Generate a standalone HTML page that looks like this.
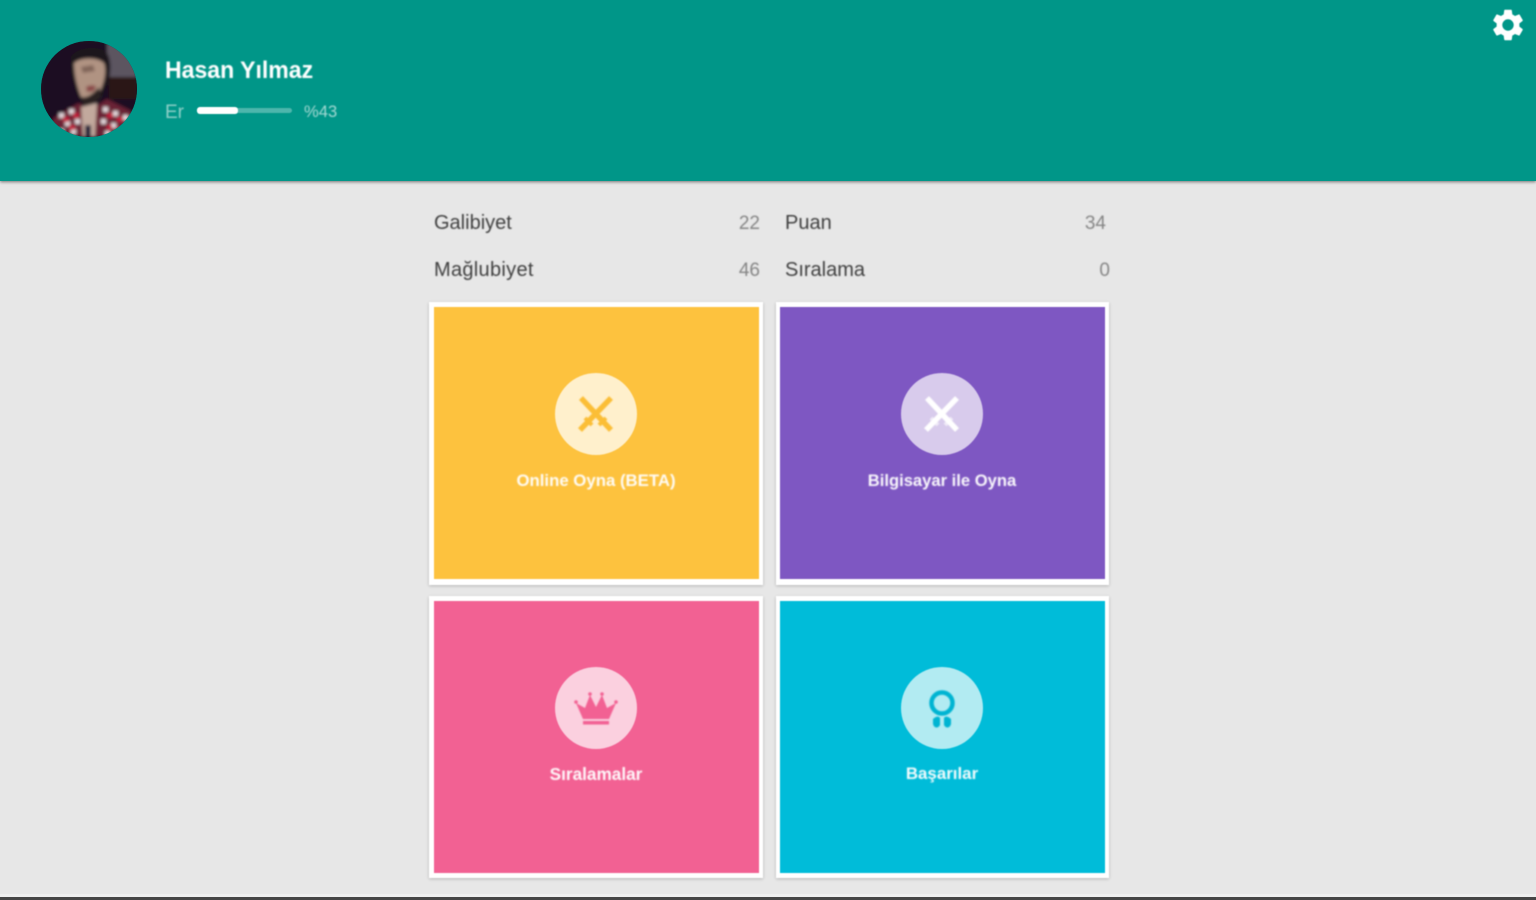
<!DOCTYPE html>
<html lang="tr">
<head>
<meta charset="utf-8">
<title>Profil</title>
<style>
html,body{margin:0;padding:0;width:1536px;height:900px;overflow:hidden;background:#e7e7e7;font-family:"Liberation Sans",sans-serif}
.abs{position:absolute}
#page{position:relative;width:1536px;height:900px;overflow:hidden;background:#e7e7e7}
#hdr{left:0;top:0;width:1536px;height:181px;background:#009688;box-shadow:0 1px 3px rgba(0,0,0,.5);filter:none}
.t{position:absolute;white-space:nowrap;filter:blur(.7px)}
.card{position:absolute;background:#fff;box-shadow:0 1px 3px rgba(0,0,0,.22);filter:blur(.4px)}
.fill{position:absolute;left:5px;top:5px}
.circ{position:absolute;width:82px;height:82px;border-radius:50%}
.circ svg{position:absolute;left:0;top:0;filter:blur(.5px)}
.lbl{position:absolute;width:326px;left:0;text-align:center;color:#fff;font-weight:bold;font-size:16.8px;line-height:20px;white-space:nowrap;filter:blur(.5px);opacity:.96}
.k{font-size:20px;line-height:24px;color:#3f3f3f}
.v{font-size:19px;line-height:24px;color:#858585;text-align:right}
#bot1{left:0;top:894px;width:1536px;height:3px;background:#efefef}
#bot2{left:0;top:897px;width:1536px;height:3px;background:#454545}
</style>
</head>
<body>
<div id="page">
<div id="hdr" class="abs"></div>

<svg class="abs" style="left:41px;top:41px" width="96" height="96" viewBox="0 0 96 96">
<defs>
<clipPath id="av"><circle cx="48" cy="48" r="48"/></clipPath>
<filter id="bl" x="-10%" y="-10%" width="120%" height="120%"><feGaussianBlur stdDeviation="1.6"/></filter>
</defs>
<circle cx="48" cy="48" r="48" fill="#1a1020"/>
<g clip-path="url(#av)">
<g filter="url(#bl)">
<rect width="96" height="96" fill="#1a1020"/>
<rect x="66" y="2" width="30" height="34" fill="#5c5460"/>
<rect x="68" y="36" width="28" height="22" fill="#2b1318"/>
<path d="M30 16C36 6 58 4 66 12C70 18 70 28 68 38L60 58L44 66L36 52L30 32Z" fill="#1f161c"/>
<path d="M33 22C40 16 56 16 63 22C66 30 63 44 57 54C51 62 43 62 40 56C36 46 33 34 33 22Z" fill="#b09382"/>
<path d="M40 26L52 24L54 30L42 32Z" fill="#6f5248" opacity=".7"/>
<path d="M40 56C46 58 53 52 58 46L60 56L48 66L42 64Z" fill="#2c2320"/>
<path d="M45 46C48 44 52 44 55 45L53 50L46 51Z" fill="#8b4a48"/>
<path d="M0 96L14 76L38 62L48 70L66 58L90 70L96 96Z" fill="#6a2236"/>
<path d="M40 66L56 62L54 96H42Z" fill="#c2a99d"/>
<g fill="#e6dce0">
<rect x="18" y="72" width="5" height="5"/><rect x="28" y="68" width="5" height="5"/><rect x="24" y="80" width="5" height="5"/>
<rect x="34" y="78" width="5" height="5"/><rect x="18" y="88" width="5" height="5"/><rect x="30" y="88" width="5" height="5"/>
<rect x="62" y="66" width="5" height="5"/><rect x="72" y="70" width="5" height="5"/><rect x="82" y="74" width="5" height="5"/>
<rect x="60" y="78" width="5" height="5"/><rect x="70" y="82" width="5" height="5"/><rect x="64" y="90" width="5" height="5"/>
</g>
<g fill="#c41f3a">
<rect x="22" y="76" width="6" height="5"/><rect x="32" y="72" width="6" height="5"/><rect x="28" y="84" width="6" height="5"/>
<rect x="66" y="72" width="6" height="5"/><rect x="76" y="76" width="6" height="5"/><rect x="66" y="84" width="5" height="5"/><rect x="76" y="86" width="5" height="5"/>
</g>
<rect x="44" y="84" width="6" height="12" fill="#1a1a38"/>
</g>
</g>
</svg>

<div class="t" style="left:165px;top:57px;font-size:24px;line-height:28px;font-weight:bold;color:#fff;transform-origin:0 0;transform:scaleX(.96)">Hasan Yılmaz</div>
<div class="t" style="left:165px;top:101px;font-size:19px;line-height:23px;color:#8fd0c8">Er</div>
<div class="abs" style="left:197px;top:108px;width:95px;height:5px;border-radius:3px;background:#4db6ac;filter:blur(.5px)"></div>
<div class="abs" style="left:197px;top:107px;width:41px;height:7px;border-radius:3px;background:#fff;filter:blur(.5px)"></div>
<div class="t" style="left:304px;top:101px;font-size:16.6px;line-height:21px;color:#a6dad4">%43</div>

<svg class="abs" style="left:1489px;top:6px;filter:blur(.6px)" width="38" height="38" viewBox="0 0 24 24"><path fill="#fff" d="M19.14 12.94c.04-.3.06-.61.06-.94s-.02-.64-.07-.94l2.03-1.58a.49.49 0 0 0 .12-.61l-1.92-3.32a.49.49 0 0 0-.59-.22l-2.39.96a7 7 0 0 0-1.62-.94l-.36-2.54a.48.48 0 0 0-.48-.41h-3.84a.47.47 0 0 0-.47.41l-.36 2.54c-.59.24-1.13.57-1.62.94l-2.39-.96a.48.48 0 0 0-.59.22L2.74 8.87a.47.47 0 0 0 .12.61l2.03 1.58c-.05.3-.09.63-.09.94s.02.64.07.94l-2.03 1.58a.49.49 0 0 0-.12.61l1.92 3.32c.12.22.37.29.59.22l2.39-.96c.5.38 1.03.7 1.62.94l.36 2.54c.05.24.24.41.48.41h3.84c.24 0 .44-.17.47-.41l.36-2.54a7 7 0 0 0 1.62-.94l2.39.96c.22.08.47 0 .59-.22l1.92-3.32a.47.47 0 0 0-.12-.61zM12 15.6A3.6 3.6 0 1 1 12 8.4a3.6 3.6 0 0 1 0 7.2z"/></svg>

<div class="t k" style="left:434px;top:211px">Galibiyet</div>
<div class="t v" style="left:660px;width:100px;top:212px">22</div>
<div class="t k" style="left:785px;top:211px">Puan</div>
<div class="t v" style="left:1006px;width:100px;top:212px">34</div>
<div class="t k" style="left:434px;top:258px;letter-spacing:.3px">Mağlubiyet</div>
<div class="t v" style="left:660px;width:100px;top:259px">46</div>
<div class="t k" style="left:785px;top:258px">Sıralama</div>
<div class="t v" style="left:1010px;width:100px;top:259px">0</div>

<!-- Card 1 -->
<div class="card" style="left:429px;top:302px;width:334px;height:283px">
  <div class="fill" style="width:325px;height:272px;background:#fdc23e"></div>
  <div class="circ" style="left:126px;top:71px;background:#fff0cc">
    <svg width="82" height="82" viewBox="0 0 82 82">
      <g stroke="#fbbe36" fill="none">
        <path d="M26 25L56 57" stroke-width="5.5"/><path d="M56 25L25 57" stroke-width="5.5"/>
        <path d="M44 52L51 45M30 45L37 52" stroke-width="4"/>
      </g>
    </svg>
  </div>
  <div class="lbl" style="top:169px;left:4px">Online Oyna (BETA)</div>
</div>

<!-- Card 2 -->
<div class="card" style="left:776px;top:302px;width:333px;height:283px">
  <div class="fill" style="left:4px;width:325px;height:272px;background:#7e57c2"></div>
  <div class="circ" style="left:125px;top:71px;background:#d8cbec">
    <svg width="82" height="82" viewBox="0 0 82 82">
      <g stroke="#fff" fill="none">
        <path d="M26 25L56 57" stroke-width="5.5"/><path d="M56 25L25 57" stroke-width="5.5"/>
        <path d="M44 52L51 45M30 45L37 52" stroke-width="4" opacity=".6"/>
      </g>
    </svg>
  </div>
  <div class="lbl" style="top:169px;left:3px;font-size:16.6px">Bilgisayar ile Oyna</div>
</div>

<!-- Card 3 -->
<div class="card" style="left:429px;top:596px;width:334px;height:282px">
  <div class="fill" style="width:325px;height:272px;background:#f26193"></div>
  <div class="circ" style="left:126px;top:71px;background:#fbd0df">
    <svg width="82" height="82" viewBox="0 0 82 82">
      <path fill="#f26193" d="M28 52L21 36L30 41L35 28L41 40L47 28L52 41L61 36L54 52Z"/>
      <rect x="28" y="54" width="26" height="3.5" fill="#f26193"/>
      <circle cx="21" cy="35" r="1.8" fill="#f26193"/><circle cx="61" cy="35" r="1.8" fill="#f26193"/>
      <circle cx="35" cy="27" r="1.8" fill="#f26193"/><circle cx="47" cy="27" r="1.8" fill="#f26193"/>
    </svg>
  </div>
  <div class="lbl" style="top:168px;left:4px;font-size:17.2px">Sıralamalar</div>
</div>

<!-- Card 4 -->
<div class="card" style="left:776px;top:596px;width:333px;height:282px">
  <div class="fill" style="left:4px;width:325px;height:272px;background:#00bcd9"></div>
  <div class="circ" style="left:125px;top:71px;background:#b2ebf2">
    <svg width="82" height="82" viewBox="0 0 82 82">
      <circle cx="41" cy="36" r="10.5" fill="none" stroke="#00b4d2" stroke-width="4.5"/>
      <path fill="#00b4d2" d="M32 52C35 49 38 49 39 51L39 58C37 62 33 61 32 57ZM50 52C47 49 44 49 43 51L43 58C45 62 49 61 50 57Z"/>
    </svg>
  </div>
  <div class="lbl" style="top:168px;left:3px;font-size:16.9px">Başarılar</div>
</div>

<div id="bot1" class="abs"></div>
<div id="bot2" class="abs"></div>
</div>
</body>
</html>
